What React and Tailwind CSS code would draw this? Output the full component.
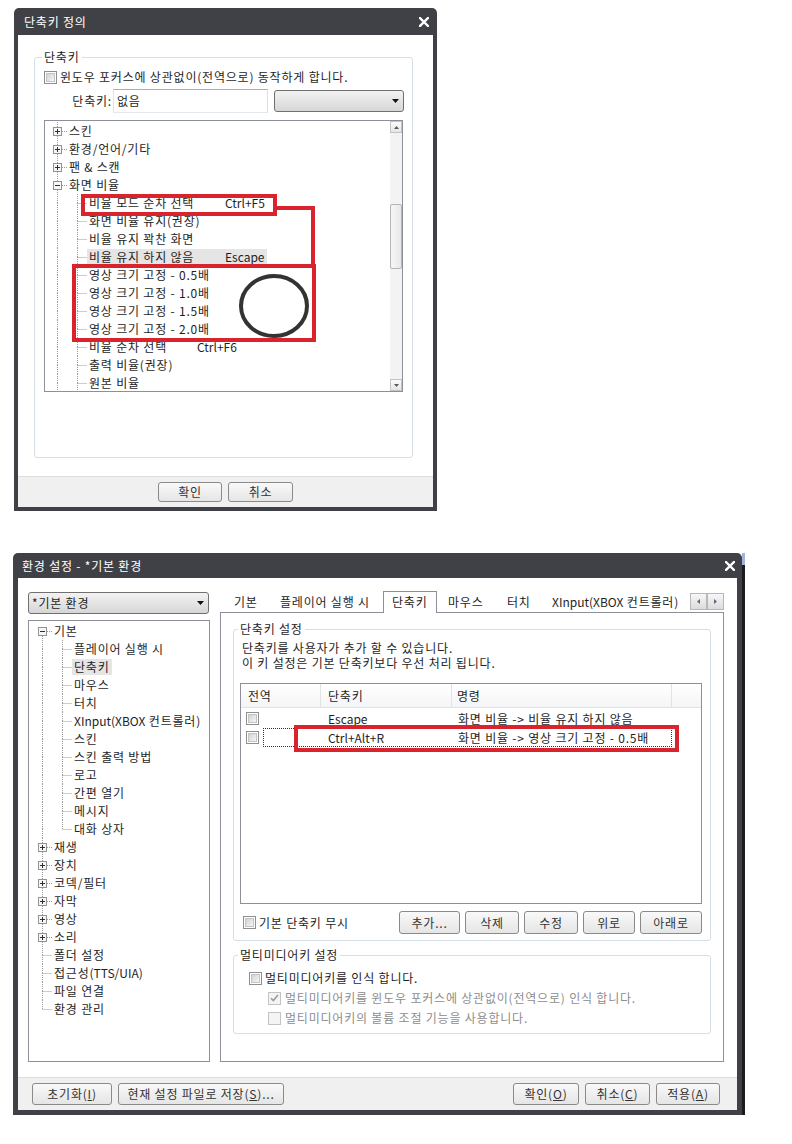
import React from "react";

function CloseX() {
  return (
    <svg width="10" height="10" viewBox="0 0 10 10" className="block shrink-0">
      <path d="M1 1L9 9M9 1L1 9" stroke="#ffffff" strokeWidth="2.4" strokeLinecap="square" />
    </svg>
  );
}

function DownTri() {
  return (
    <svg width="7" height="4" viewBox="0 0 7 4" className="block">
      <polygon points="0,0 7,0 3.5,4" fill="#111" />
    </svg>
  );
}

function Check({ variant = "normal" }) {
  if (variant === "normal") {
    return (
      <span className="flex w-[13px] h-[13px] shrink-0 border border-[#8e8f8f] bg-white p-[1px]">
        <span className="flex-1 border border-[#c4c4c4] bg-gradient-to-br from-[#d2d2d2] to-[#f6f6f6]" />
      </span>
    );
  }
  return (
    <span className="relative flex w-[13px] h-[13px] shrink-0 items-center justify-center border border-[#c3c3c3] bg-[#f4f4f4]">
      {variant === "checked" && (
        <svg width="9" height="8" viewBox="0 0 9 8" className="block">
          <path d="M1 4.2L3.3 6.5L8 1" stroke="#9a9a9a" strokeWidth="1.6" fill="none" />
        </svg>
      )}
    </span>
  );
}

function Btn({ children, className }) {
  return (
    <div
      className={`flex items-center justify-center rounded-[3px] border border-[#8a8a8a] bg-gradient-to-b from-[#f9f9f9] to-[#e5e5e5] text-[#333] leading-[16px] ${className}`}
    >
      {children}
    </div>
  );
}

function Conn({ type }) {
  const x = 10.5;
  const dash = { stroke: "#9a9a9a", strokeDasharray: "1 1", strokeWidth: 1 };
  const isPlus = type.startsWith("plus");
  const isBox = isPlus || type.startsWith("minus");
  const lineTop = type === "v" || type === "tee" || type === "corner" || type.endsWith("-t");
  const lineBottom = type === "v" || type === "tee" || type === "minus-b" || type.endsWith("-t");
  const stub = type === "tee" || type === "corner" || isBox;
  return (
    <svg width="20" height="18" className="block shrink-0">
      {lineTop && <line x1={x} y1={0} x2={x} y2={isBox ? 5 : 9} {...dash} />}
      {lineBottom && <line x1={x} y1={isBox ? 14 : 9} x2={x} y2={18} {...dash} />}
      {stub && <line x1={isBox ? 15 : x} y1={9.5} x2={20} y2={9.5} {...dash} />}
      {isBox && (
        <>
          <rect x={6.5} y={5.5} width={8} height={8} fill="#f6f6f6" stroke="#929292" />
          <line x1={8} y1={9.5} x2={13} y2={9.5} stroke="#2f2f2f" />
          {isPlus && <line x1={10.5} y1={7} x2={10.5} y2={12} stroke="#2f2f2f" />}
        </>
      )}
    </svg>
  );
}

function TreeRow({ cells, label, shortcut, labelW, highlight }) {
  return (
    <div className="flex h-[18px] items-center whitespace-nowrap">
      {cells.map((t, i) => (
        <Conn key={i} type={t} />
      ))}
      <span
        className={`flex h-[16px] items-center px-[2px] leading-[16px] ${highlight ? "bg-[#e5e5e5]" : ""}`}
      >
        {shortcut ? (
          <>
            <span className={labelW}>{label}</span>
            <span className="tracking-normal">{shortcut}</span>
          </>
        ) : (
          label
        )}
      </span>
    </div>
  );
}

const topTree = [
  { cells: ["plus-t"], label: "스킨" },
  { cells: ["plus-t"], label: "환경/언어/기타" },
  { cells: ["plus-t"], label: "팬 & 스캔" },
  { cells: ["minus-t"], label: "화면 비율" },
  { cells: ["v", "tee"], label: "비율 모드 순차 선택", shortcut: "Ctrl+F5", labelW: "w-[136px]" },
  { cells: ["v", "tee"], label: "화면 비율 유지(권장)" },
  { cells: ["v", "tee"], label: "비율 유지 꽉찬 화면" },
  { cells: ["v", "tee"], label: "비율 유지 하지 않음", shortcut: "Escape", labelW: "w-[136px]", highlight: true },
  { cells: ["v", "tee"], label: "영상 크기 고정 - 0.5배" },
  { cells: ["v", "tee"], label: "영상 크기 고정 - 1.0배" },
  { cells: ["v", "tee"], label: "영상 크기 고정 - 1.5배" },
  { cells: ["v", "tee"], label: "영상 크기 고정 - 2.0배" },
  { cells: ["v", "tee"], label: "비율 순차 선택", shortcut: "Ctrl+F6", labelW: "w-[108px]" },
  { cells: ["v", "tee"], label: "출력 비율(권장)" },
  { cells: ["v", "tee"], label: "원본 비율" },
];

const leftTree = [
  { cells: ["minus-b"], label: "기본" },
  { cells: ["v", "tee"], label: "플레이어 실행 시" },
  { cells: ["v", "tee"], label: "단축키", highlight: true },
  { cells: ["v", "tee"], label: "마우스" },
  { cells: ["v", "tee"], label: "터치" },
  {
    cells: ["v", "tee"],
    label: (
      <>
        <span className="tracking-normal">XInput(XBOX</span>&nbsp;컨트롤러)
      </>
    ),
  },
  { cells: ["v", "tee"], label: "스킨" },
  { cells: ["v", "tee"], label: "스킨 출력 방법" },
  { cells: ["v", "tee"], label: "로고" },
  { cells: ["v", "tee"], label: "간편 열기" },
  { cells: ["v", "tee"], label: "메시지" },
  { cells: ["v", "corner"], label: "대화 상자" },
  { cells: ["plus-t"], label: "재생" },
  { cells: ["plus-t"], label: "장치" },
  { cells: ["plus-t"], label: "코덱/필터" },
  { cells: ["plus-t"], label: "자막" },
  { cells: ["plus-t"], label: "영상" },
  { cells: ["plus-t"], label: "소리" },
  { cells: ["tee"], label: "폴더 설정" },
  {
    cells: ["tee"],
    label: (
      <>
        접근성<span className="tracking-normal">(TTS/UIA)</span>
      </>
    ),
  },
  { cells: ["tee"], label: "파일 연결" },
  { cells: ["corner"], label: "환경 관리" },
];

function ScrollArrow({ up }) {
  return (
    <div className="flex h-[12px] items-center justify-center border border-[#c3c3c3] bg-gradient-to-b from-[#fbfbfb] to-[#e6e6e6]">
      <svg width="5" height="3" viewBox="0 0 5 3" className="block">
        <polygon points={up ? "0,3 5,3 2.5,0" : "0,0 5,0 2.5,3"} fill="#5a5a5a" />
      </svg>
    </div>
  );
}

function TopDialog() {
  return (
    <div className="flex h-[503px] w-[423px] flex-col rounded-t-[5px] bg-[#3f4147] px-[4px] pb-[4px]">
      <div className="flex h-[27px] items-center justify-between pl-[6px] pr-[4px] text-[12px] leading-[27px] text-white">
        <span>단축키 정의</span>
        <CloseX />
      </div>
      <div className="flex flex-1 flex-col bg-white">
        <fieldset className="ml-[16px] mt-[13px] h-[410px] w-[379px] rounded-[3px] border border-[#d5dfe5] pl-[9px]">
          <legend className="-ml-[2px] px-[2px] leading-[18px]">단축키</legend>
          <div className="mt-[2px] flex h-[18px] items-center gap-[3px] leading-[18px]">
            <Check />
            <span>윈도우 포커스에 상관없이(전역으로) 동작하게 합니다.</span>
          </div>
          <div className="mt-[3px] flex h-[24px] items-center">
            <span className="w-[68px] text-right leading-[18px]">단축키:</span>
            <div className="ml-[1px] flex h-[24px] w-[155px] items-center border border-[#abadb3] border-b-[#e3e9ef] border-l-[#e2e3ea] border-r-[#dbdfe6] pl-[3px] leading-[18px]">
              없음
            </div>
            <div className="ml-[6px] flex h-[22px] w-[130px] items-center justify-end rounded-[3px] border border-[#707070] bg-gradient-to-b from-[#f3f3f3] to-[#d6d6d6] pr-[4px]">
              <DownTri />
            </div>
          </div>
          <div className="mt-[7px] flex h-[272px] w-[359px] border border-[#8e9099]">
            <div className="flex-1 overflow-hidden pl-[2px] pt-[1px]">
              {topTree.map((r, i) => (
                <TreeRow key={i} {...r} />
              ))}
            </div>
            <div className="flex w-[12px] flex-col bg-[#f3f3f3]">
              <ScrollArrow up />
              <div className="flex-1">
                <div className="mt-[71px] h-[65px] rounded-[2px] border border-[#b5b5b5] bg-gradient-to-r from-[#f7f7f7] to-[#e8e8e8]" />
              </div>
              <ScrollArrow />
            </div>
          </div>
        </fieldset>
        <div className="mt-auto flex h-[31px] items-center justify-center gap-[6px] border-t border-[#dcdcdc] bg-[#f0f0f0]">
          <Btn className="h-[20px] w-[64px]">확인</Btn>
          <Btn className="h-[20px] w-[65px]">취소</Btn>
        </div>
      </div>
    </div>
  );
}

function TabArrow({ left }) {
  return (
    <div className="flex h-[17px] w-[17px] items-center justify-center border border-[#b8b8b8] bg-gradient-to-b from-[#f7f7f7] to-[#dcdcdc]">
      <svg width="3" height="5" viewBox="0 0 3 5" className="block">
        <polygon points={left ? "3,0 3,5 0,2.5" : "0,0 0,5 3,2.5"} fill="#55698a" />
      </svg>
    </div>
  );
}

function BottomDialog() {
  return (
    <div className="flex">
      <div className="flex h-[562px] w-[729px] flex-col rounded-t-[5px] bg-[#3f4147] px-[5px] pb-[5px]">
        <div className="flex h-[25px] items-center justify-between pl-[4px] pr-[2px] text-[12px] leading-[25px] text-white">
          <span>환경 설정 - *기본 환경</span>
          <CloseX />
        </div>
        <div className="flex flex-1 flex-col bg-white">
          <div className="flex pl-[10px]">
            <div className="w-[182px] pt-[14px]">
              <div className="flex h-[22px] w-[181px] items-center justify-between rounded-[3px] border border-[#707070] bg-gradient-to-b from-[#f3f3f3] to-[#d6d6d6] pl-[3px] pr-[4px] leading-[18px]">
                <span>*기본 환경</span>
                <DownTri />
              </div>
              <div className="mt-[6px] h-[442px] w-[182px] overflow-hidden border border-[#8e9099] pl-[3px] pt-[1px]">
                {leftTree.map((r, i) => (
                  <TreeRow key={i} {...r} />
                ))}
              </div>
            </div>
            <div className="ml-[10px] w-[504px] pt-[13px]">
              <div className="flex h-[22px] items-end whitespace-nowrap">
                <div className="h-[22px] w-[3px] border-b border-[#8e9099]" />
                <div className="flex h-[22px] w-[46px] items-center border-b border-[#8e9099] pl-[11px] leading-[18px]">기본</div>
                <div className="flex h-[22px] w-[114px] items-center border-b border-[#8e9099] pl-[11px] leading-[18px]">플레이어 실행 시</div>
                <div className="flex h-[22px] w-[54px] items-center border-x border-t border-[#8e9099] bg-white pb-[1px] pl-[8px] leading-[18px]">
                  단축키
                </div>
                <div className="flex h-[22px] w-[59px] items-center border-b border-[#8e9099] pl-[11px] leading-[18px]">마우스</div>
                <div className="flex h-[22px] w-[45px] items-center border-b border-[#8e9099] pl-[11px] leading-[18px]">터치</div>
                <div className="flex h-[22px] w-[140px] items-center border-b border-[#8e9099] pl-[11px] leading-[18px]">
                  <span className="tracking-normal">XInput(XBOX</span>&nbsp;컨트롤러)
                </div>
                <div className="flex h-[22px] flex-1 items-start justify-end border-b border-[#8e9099] pt-[2px]">
                  <TabArrow left />
                  <TabArrow />
                </div>
              </div>
              <div className="h-[449px] border-x border-b border-[#8e9099] px-[12px] pt-[7px]">
                <fieldset className="h-[321px] rounded-[3px] border border-[#d5dfe5] pl-[6px] pr-[8px]">
                  <legend className="-ml-[2px] px-[2px] leading-[18px]">단축키 설정</legend>
                  <div className="mt-[2px] pl-[2px] leading-[15px]">
                    <div>단축키를 사용자가 추가 할 수 있습니다.</div>
                    <div>이 키 설정은 기본 단축키보다 우선 처리 됩니다.</div>
                  </div>
                  <div className="mt-[13px] h-[221px] border border-[#8e9099]">
                    <div className="flex h-[24px] border-b border-[#e3e3e3] bg-gradient-to-b from-white to-[#f4f5f7] leading-[18px]">
                      <div className="flex w-[80px] items-center border-r border-[#e3e3e3] pl-[7px]">전역</div>
                      <div className="flex w-[131px] items-center border-r border-[#e3e3e3] pl-[7px]">단축키</div>
                      <div className="flex w-[220px] items-center border-r border-[#e3e3e3] pl-[5px]">명령</div>
                      <div className="flex-1" />
                    </div>
                    <div className="pt-[1px]">
                      <div className="flex h-[19px] items-center leading-[17px]">
                        <div className="flex w-[22px] items-center pl-[5px]">
                          <Check />
                        </div>
                        <div className="flex h-[19px] w-[409px] items-center border border-transparent">
                          <div className="w-[57px]" />
                          <div className="w-[131px] pl-[7px] tracking-normal">Escape</div>
                          <div className="pl-[6px]">화면 비율 -&gt; 비율 유지 하지 않음</div>
                        </div>
                      </div>
                      <div className="flex h-[19px] items-center leading-[17px]">
                        <div className="flex w-[22px] items-center pl-[5px]">
                          <Check />
                        </div>
                        <div className="flex h-[19px] w-[409px] items-center border border-dotted border-[#333]">
                          <div className="w-[57px]" />
                          <div className="w-[131px] pl-[7px] tracking-normal">Ctrl+Alt+R</div>
                          <div className="pl-[6px]">화면 비율 -&gt; 영상 크기 고정 - 0.5배</div>
                        </div>
                      </div>
                    </div>
                  </div>
                  <div className="mt-[7px] flex h-[23px] items-center">
                    <div className="ml-[3px] flex items-center gap-[3px] leading-[18px]">
                      <Check />
                      <span>기본 단축키 무시</span>
                    </div>
                    <div className="ml-auto flex gap-[5px]">
                      <Btn className="h-[23px] w-[61px]">추가...</Btn>
                      <Btn className="h-[23px] w-[54px]">삭제</Btn>
                      <Btn className="h-[23px] w-[54px]">수정</Btn>
                      <Btn className="h-[23px] w-[52px]">위로</Btn>
                      <Btn className="h-[23px] w-[62px]">아래로</Btn>
                    </div>
                  </div>
                </fieldset>
                <fieldset className="mt-[5px] h-[88px] rounded-[3px] border border-[#d5dfe5] pl-[6px]">
                  <legend className="-ml-[2px] px-[2px] leading-[18px]">멀티미디어키 설정</legend>
                  <div className="mt-[4px] flex h-[20px] items-center gap-[3px] pl-[9px] leading-[18px]">
                    <Check />
                    <span>멀티미디어키를 인식 합니다.</span>
                  </div>
                  <div className="flex h-[20px] items-center gap-[4px] pl-[28px] leading-[18px] text-[#8d8d8d]">
                    <Check variant="checked" />
                    <span>멀티미디어키를 윈도우 포커스에 상관없이(전역으로) 인식 합니다.</span>
                  </div>
                  <div className="flex h-[20px] items-center gap-[4px] pl-[28px] leading-[18px] text-[#8d8d8d]">
                    <Check variant="disabled" />
                    <span>멀티미디어키의 볼륨 조절 기능을 사용합니다.</span>
                  </div>
                </fieldset>
              </div>
            </div>
          </div>
          <div className="mt-auto flex h-[33px] items-center border-t border-[#dcdcdc] bg-[#f0f0f0] pl-[14px] pr-[17px]">
            <Btn className="h-[22px] w-[80px]">
              초기화(<span className="underline">I</span>)
            </Btn>
            <Btn className="ml-[6px] h-[22px] w-[166px]">
              현재 설정 파일로 저장(<span className="underline">S</span>)...
            </Btn>
            <div className="ml-auto flex gap-[6px]">
              <Btn className="h-[22px] w-[66px]">
                확인(<span className="underline">O</span>)
              </Btn>
              <Btn className="h-[22px] w-[65px]">
                취소(<span className="underline">C</span>)
              </Btn>
              <Btn className="h-[22px] w-[64px]">
                적용(<span className="underline">A</span>)
              </Btn>
            </div>
          </div>
        </div>
      </div>
      <div className="flex w-[3px] flex-col">
        <div className="h-[12px] bg-[#9fb3dd]" />
        <div className="flex-1 bg-[#1c1c1e]" />
      </div>
    </div>
  );
}

function Annotations() {
  return (
    <>
      <div className="absolute left-[81px] top-[194px] h-[22px] w-[196px] border-4 border-[#d9232d]" />
      <div className="absolute left-[276px] top-[206px] h-[4px] w-[39px] bg-[#d9232d]" />
      <div className="absolute left-[311px] top-[206px] h-[60px] w-[4px] bg-[#d9232d]" />
      <div className="absolute left-[72px] top-[264px] h-[78px] w-[244px] border-4 border-[#d9232d]" />
      <svg className="absolute left-[236px] top-[271px]" width="76" height="70" viewBox="0 0 76 70">
        <ellipse cx="38" cy="35" rx="33" ry="30" fill="none" stroke="#333" strokeWidth="4" />
      </svg>
      <div className="absolute left-[294px] top-[725px] h-[27px] w-[385px] border-4 border-[#d9232d]" />
    </>
  );
}

export default function App() {
  return (
    <div className="relative h-[1144px] w-[792px] overflow-hidden bg-white font-['Noto_Sans_CJK_KR',sans-serif] text-[12px] tracking-[0.8px] text-[#1e1e1e]">
      <div className="pl-[14px] pt-[8px]">
        <TopDialog />
      </div>
      <div className="pl-[13px] pt-[42px]">
        <BottomDialog />
      </div>
      <Annotations />
    </div>
  );
}
